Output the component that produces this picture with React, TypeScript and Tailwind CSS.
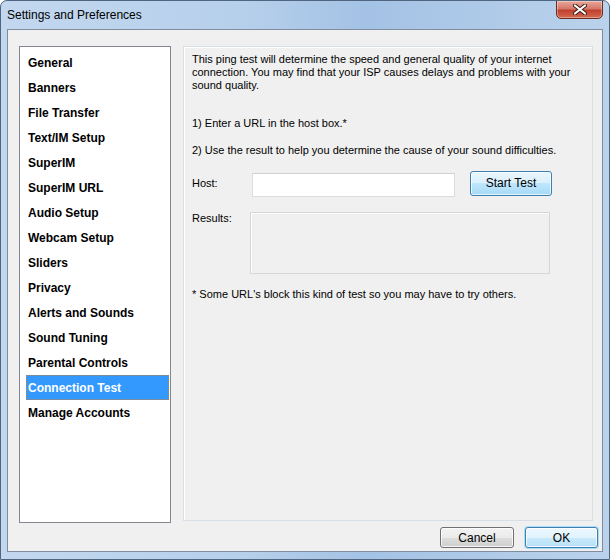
import { useState } from 'react';

const sections = [
  'General',
  'Banners',
  'File Transfer',
  'Text/IM Setup',
  'SuperIM',
  'SuperIM URL',
  'Audio Setup',
  'Webcam Setup',
  'Sliders',
  'Privacy',
  'Alerts and Sounds',
  'Sound Tuning',
  'Parental Controls',
  'Connection Test',
  'Manage Accounts',
];

const font = { fontFamily: '"Liberation Sans", Arial, sans-serif' };

const App = () => {
  const [active, setActive] = useState('Connection Test');
  const [host, setHost] = useState('');

  return (
    <div
      className="w-[610px] h-[560px] flex flex-col rounded-t-[7px] border border-[#4f6580] bg-[linear-gradient(90deg,#c3d8ef_0%,#b6cfeb_40%,#a4c2e5_60%,#bad2ec_100%)] overflow-hidden"
      style={font}
    >
      {/* Title bar */}
      <div className="h-[28px] flex items-start justify-between pl-[6px] pr-[6px] shrink-0">
        <span className="mt-[7px] text-[12px] leading-[14px] text-black">Settings and Preferences</span>
        <button className="w-[47px] h-[19px] -mt-px flex items-center justify-center rounded-b-[5px] border border-[#6d2b22] bg-[linear-gradient(180deg,#e9a99a_0%,#d4786a_45%,#c0402e_55%,#d26a50_100%)] shadow-[inset_0_0_0_1px_rgba(255,255,255,0.35)]">
          <svg width="14" height="11" viewBox="0 0 14 11">
            <path d="M2 1.5 L12 9.5 M12 1.5 L2 9.5" stroke="#3b1c18" strokeWidth="4" strokeLinecap="round" />
            <path d="M2 1.5 L12 9.5 M12 1.5 L2 9.5" stroke="#ffffff" strokeWidth="2.2" strokeLinecap="round" />
          </svg>
        </button>
      </div>

      {/* Client area */}
      <div className="mx-[6px] h-[523px] border border-[#7f8d9e] bg-[#f0f0f0] flex flex-col">
        <div className="flex pl-[11px] pt-[16px] gap-[12px]">
          {/* Section list */}
          <div className="w-[152px] h-[477px] border border-[#828790] bg-white pt-[3px] pr-px">
            {sections.map((s) => (
              <div
                key={s}
                onClick={() => setActive(s)}
                className={
                  s === active
                    ? 'ml-[6px] h-[25px] flex items-center pl-[1px] text-[12px] font-bold text-white bg-[#3399ff] border border-dotted border-[#c08040]'
                    : 'ml-[6px] h-[25px] flex items-center pl-[2px] text-[12px] font-bold text-black cursor-default'
                }
              >
                {s}
              </div>
            ))}
          </div>

          {/* Connection test panel */}
          <div className="w-[410px] h-[475px] border border-[#d5dfe5] shadow-[inset_1px_1px_0_#ffffff] pl-[8px] pt-[6px] text-[11px] leading-[13px] text-black">
            <p className="w-[390px]">
              This ping test will determine the speed and general quality of your internet connection. You may find
              that your ISP causes delays and problems with your sound quality.
            </p>
            <p className="mt-[25px]">1) Enter a URL in the host box.*</p>
            <p className="mt-[14px]">2) Use the result to help you determine the cause of your sound difficulties.</p>

            <div className="mt-[14px] flex items-center h-[25px]">
              <span className="w-[60px]">Host:</span>
              <input
                value={host}
                onChange={(e) => setHost(e.target.value)}
                className="w-[203px] h-[24px] mt-[3px] bg-white border border-[#dcdcdc] border-t-[#d0d0d0] outline-none px-1 text-[11px]"
              />
              <button className="ml-[15px] w-[82px] h-[25px] rounded-[3px] border border-[#3c7fb1] bg-[linear-gradient(180deg,#eaf6fd_0%,#d9f0fc_50%,#bee6fd_50%,#a7d9f5_100%)] shadow-[inset_0_0_0_1px_rgba(255,255,255,0.7)] text-[12px]">
                Start Test
              </button>
            </div>

            <div className="mt-[16px] flex items-start">
              <span className="w-[58px]">Results:</span>
              <div className="w-[300px] h-[62px] border border-[#d6d6d6] shadow-[inset_1px_1px_0_#ffffff]" />
            </div>

            <p className="mt-[14px]">* Some URL's block this kind of test so you may have to try others.</p>
          </div>
        </div>

        {/* Dialog buttons */}
        <div className="mt-[4px] flex justify-end gap-[11px] pr-[4px]">
          <button className="w-[74px] h-[21px] rounded-[3px] border border-[#707070] bg-[linear-gradient(180deg,#f2f2f2_0%,#ebebeb_50%,#dddddd_50%,#cfcfcf_100%)] shadow-[inset_0_0_0_1px_rgba(255,255,255,0.8)] text-[12px] leading-[14px] text-black">
            Cancel
          </button>
          <button className="w-[73px] h-[21px] rounded-[3px] border border-[#3c7fb1] bg-[linear-gradient(180deg,#edf8fe_0%,#e0f3fd_50%,#cbeafc_50%,#b6e0f8_100%)] shadow-[inset_0_0_0_1px_rgba(255,255,255,0.8),0_0_0_1px_#a9dcf7] text-[12px] leading-[14px] text-black">
            OK
          </button>
        </div>
      </div>
    </div>
  );
};

export default App;
